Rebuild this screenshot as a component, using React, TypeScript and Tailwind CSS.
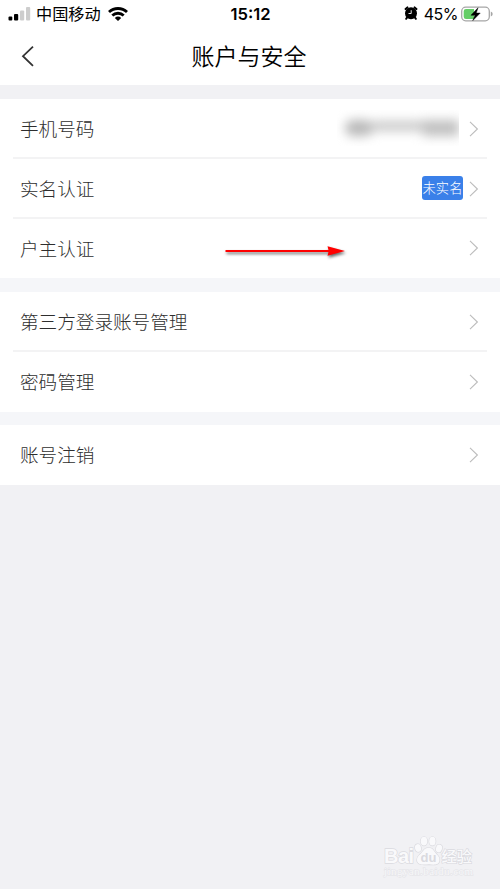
import React from "react";

const Chevron = () => (
  <svg className="mt-px h-[16px] w-[10px] shrink-0" viewBox="0 0 10 16" fill="none" stroke="#bcbcbc" strokeWidth="1.1">
    <path d="M1 .8 8.4 8 1 15.2" />
  </svg>
);

function Row({ label, height, divider, children }: { label: string; height: string; divider?: boolean; children?: React.ReactNode }) {
  return (
    <div className={`mx-[13px] flex items-center border-b-2 pr-2 pl-[7px] ${height} ${divider ? "border-[#f3f3f4]" : "border-transparent"}`}>
      <span className="grow text-[18.6px] leading-7 font-light text-[#2e2e2e]">{label}</span>
      {children}
      <Chevron />
    </div>
  );
}

const Signal = () => (
  <svg className="mb-px h-[14px] w-[23px]" viewBox="0 0 23 14">
    <rect x=".5" y="9.5" width="3.8" height="4" rx="1" fill="#000" />
    <rect x="6" y="7" width="4.2" height="6.5" rx="1" fill="#000" />
    <rect x="12" y="3.5" width="4.2" height="10" rx="1" fill="#cdcdcd" />
    <rect x="18" y="0" width="4.2" height="13.5" rx="1" fill="#cdcdcd" />
  </svg>
);

const Wifi = () => (
  <svg className="h-[14px] w-5" viewBox="0 0 20 14" fill="none" stroke="#000" strokeWidth="2.8">
    <path d="M1 5.1a13 13 0 0 1 18 0M4.3 8.5a8.3 8.3 0 0 1 11.4 0" />
    <path d="M6.8 10.9a4.7 4.7 0 0 1 6.4 0L10 14Z" fill="#000" stroke="none" />
  </svg>
);

const Alarm = () => (
  <svg className="mb-[2px] h-[14px] w-[14px]" viewBox="0 0 14 14">
    <path d="M1.6 3 3.4 1.4M12.4 3 10.6 1.4M3 11.6 2.2 12.8M11 11.6l.8 1.2" stroke="#000" strokeWidth="2" strokeLinecap="round" />
    <circle cx="7" cy="7.2" r="6" fill="#000" />
    <path d="M7.2 4.2v3.3H4.5" stroke="#fff" strokeWidth=".9" fill="none" />
  </svg>
);

const Battery = () => (
  <svg className="mb-px h-4 w-8" viewBox="0 0 32 16">
    <rect x=".7" y="1.2" width="27.6" height="13.6" rx="4" fill="#fff" stroke="#a6a6a6" strokeWidth="1.3" />
    <path d="M5 3h8v10H5a2.3 2.3 0 0 1-2.3-2.3V5.3A2.3 2.3 0 0 1 5 3Z" fill="#65ce67" />
    <path d="M29.8 5.6v4.8q1.9-.8 1.9-2.4t-1.9-2.4Z" fill="#a6a6a6" />
    <path d="m17 1.8-7 7.4h4L11.8 14.6l7.4-7.5h-4Z" fill="#000" stroke="#000" strokeWidth=".5" strokeLinejoin="round" />
  </svg>
);

const Watermark = () => (
  <svg className="absolute top-[832px] left-[380px] h-[50px] w-[100px]" viewBox="0 0 100 50" fill="#f9f9fb" stroke="#dadadf" strokeWidth="1.3" paintOrder="stroke">
    <text x="4" y="31" fontFamily="Liberation Sans, sans-serif" fontWeight="bold" fontSize="20" textLength="30">Bai</text>
    <ellipse cx="38" cy="16" rx="3" ry="3.9" transform="rotate(-12 38 16)" />
    <ellipse cx="44" cy="9.2" rx="3.2" ry="4.4" />
    <ellipse cx="52.4" cy="9.2" rx="3.2" ry="4.4" />
    <ellipse cx="59" cy="16.5" rx="3" ry="3.9" transform="rotate(15 59 16.5)" />
    <path d="M43 19c3-4.2 8.5-4.2 11 0 2.4 3.8 5.5 4.7 5.5 9 0 5-5 5-10.5 4.3-6 .7-12 .5-12-4.3 0-4.3 3.5-5.2 6-9Z" />
    <text x="40.5" y="29.5" fontFamily="Liberation Sans, sans-serif" fontWeight="bold" fontSize="13" fill="#dadadf" stroke="none">du</text>
    <text x="61.5" y="30" fontFamily="Noto Sans CJK SC, sans-serif" fontWeight="500" fontSize="15.2">经验</text>
    <text x="4" y="43" fontFamily="Liberation Serif, serif" fontSize="11" textLength="89" fill="#f8f8fa" stroke="#e2e2e6" strokeWidth=".9">jingyan.baidu.com</text>
  </svg>
);

export default function App() {
  return (
    <div className="relative h-[889px] w-[500px] overflow-hidden bg-[#f1f1f4] font-['Noto_Sans_CJK_SC',sans-serif]">
      <header className="h-[85px] bg-white text-black">
        <div className="grid h-7 grid-cols-[1fr_auto_1fr] items-center pr-[7px] pl-2">
          <div className="flex items-center">
            <Signal />
            <span className="-mt-[3px] ml-[5px] text-[16.2px] leading-7">中国移动</span>
            <span className="ml-[7px]"><Wifi /></span>
          </div>
          <span className="font-['Inter',sans-serif] text-[16.6px] leading-7 font-semibold">15:12</span>
          <div className="flex items-center justify-end">
            <Alarm />
            <span className="mr-[3px] ml-[6px] font-['Inter',sans-serif] text-[16px] leading-7 tracking-[-0.5px]">45%</span>
            <Battery />
          </div>
        </div>
        <div className="grid h-[55px] grid-cols-[1fr_auto_1fr] items-center pr-[23px] pl-[21px]">
          <svg className="h-[22px] w-[14px]" viewBox="0 0 14 22" fill="none" stroke="#333" strokeWidth="1.8">
            <path d="M12 1.6 2 11.2l10 9.6" />
          </svg>
          <h1 className="-mt-px text-[23px] leading-8 font-[350]">账户与安全</h1>
        </div>
      </header>

      <section className="mt-[14px] bg-white">
        <Row label="手机号码" height="h-[60px]" divider>
          <div className="mr-[10px] flex h-9 w-[122px] items-center justify-end overflow-hidden">
            <div className="flex h-4 w-[114px] items-center blur-[5.5px]">
              <span className="h-4 w-7 rounded-full bg-[#b8b8b8]" />
              <span className="mb-1 h-[10px] grow bg-[#c8c8c8]" />
              <span className="h-4 w-9 bg-[#c0c0c0]" />
            </div>
          </div>
        </Row>
        <Row label="实名认证" height="h-[60px]" divider>
          <span className="mr-[6px] flex h-6 w-[41px] items-center justify-center rounded-[3px] bg-[#3a80e9] text-[13.3px] leading-6 font-light whitespace-nowrap text-white">未实名</span>
        </Row>
        <Row label="户主认证" height="h-[59px]" />
      </section>

      <div className="h-[14px] bg-[#f5f6f9]" />
      <section className="bg-white">
        <Row label="第三方登录账号管理" height="h-[60px]" divider />
        <Row label="密码管理" height="h-[60px]" />
      </section>
      <div className="h-[13px] bg-[#f5f6f9]" />
      <section className="bg-white">
        <Row label="账号注销" height="h-[60px]" />
      </section>

      <svg className="absolute top-[240px] left-[220px] h-6 w-[132px] drop-shadow-[1px_2px_1.5px_rgba(0,0,0,0.6)]" viewBox="0 0 132 24">
        <path d="M5.5 10h103l-1-3.8 17.5 4.8-17.5 4.8 1-3.8h-103Z" fill="#f00" />
      </svg>
      <Watermark />
    </div>
  );
}
